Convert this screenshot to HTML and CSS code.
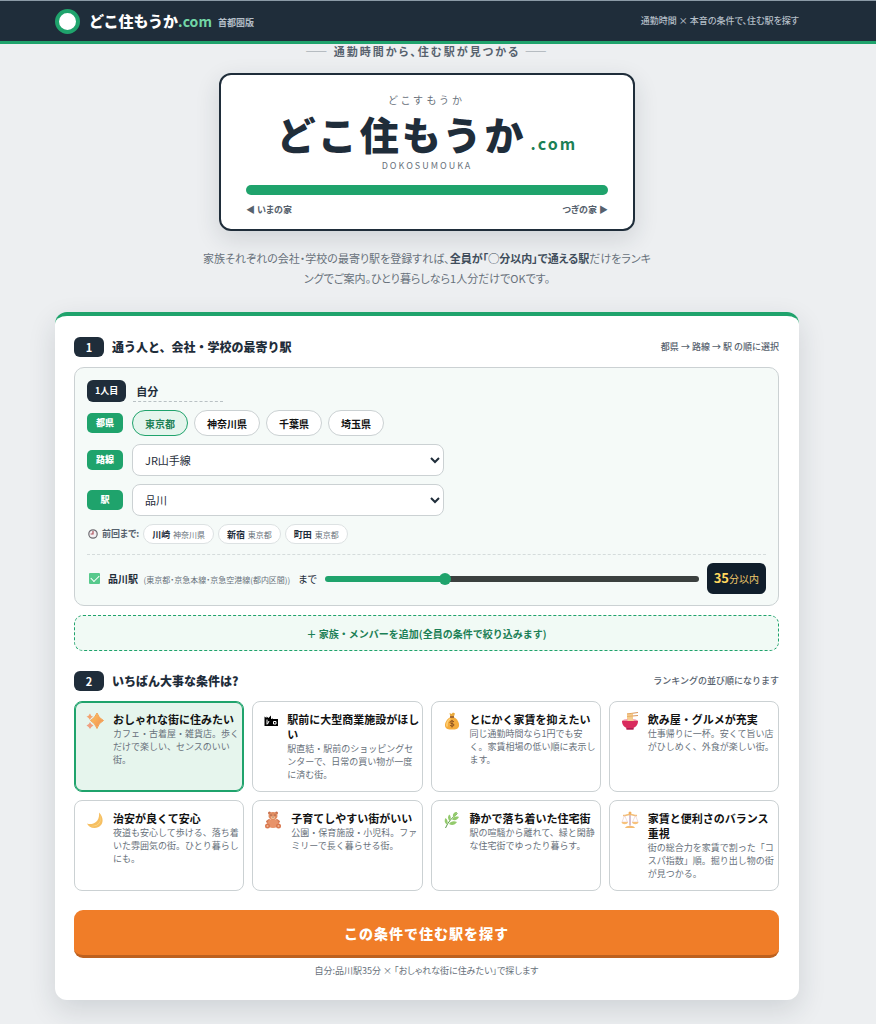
FILE: index.html
```
<!DOCTYPE html>
<html lang="ja">
  <head>
    <meta charset="UTF-8" />
    <meta name="viewport" content="width=device-width, initial-scale=1.0" />
    <title>どこ住もうか.com 首都圏版</title>
    <link rel="stylesheet" href="styles.css">
  </head>
  <body>
    <header class="site-header">
      <a class="brand" href="#">
        <span class="brand-mark"></span>
        <span class="brand-name">どこ住もうか<span class="brand-com">.com</span></span>
        <span class="brand-area">首都圏版</span>
      </a>
      <p class="tagline">通勤時間 × 本音の条件で、住む駅を探す</p>
    </header>

    <main class="page">
      <section class="hero">
        <p class="kicker"><span class="dash">――</span> 通勤時間から、住む駅が見つかる <span class="dash">――</span></p>
        <div class="sign">
          <p class="sign-kana">どこすもうか</p>
          <h1 class="sign-name">どこ住もうか<span class="sign-com">.com</span></h1>
          <p class="sign-roman">DOKOSUMOUKA</p>
          <div class="sign-line"></div>
          <div class="sign-ends">
            <span>◀ いまの家</span>
            <span>つぎの家 ▶</span>
          </div>
        </div>
        <p class="lead">家族それぞれの会社・学校の最寄り駅を登録すれば、<strong>全員が「◯分以内」で通える駅</strong>だけをランキングでご案内。ひとり暮らしなら1人分だけでOKです。</p>
      </section>

      <form class="search">
        <div class="section-head">
          <span class="num">1</span>
          <h2>通う人と、会社・学校の最寄り駅</h2>
          <span class="note">都県 → 路線 → 駅 の順に選択</span>
        </div>

        <div class="member">
          <div class="member-head">
            <label class="member-no" for="memberName">1人目</label>
            <input class="member-name" id="memberName" type="text" value="自分" />
          </div>

          <div class="field">
            <span class="field-label">都県</span>
            <div class="chips">
              <button class="chip active" type="button">東京都</button>
              <button class="chip" type="button">神奈川県</button>
              <button class="chip" type="button">千葉県</button>
              <button class="chip" type="button">埼玉県</button>
            </div>
          </div>

          <div class="field">
            <label class="field-label" for="line">路線</label>
            <select id="line">
              <option>JR山手線</option>
            </select>
          </div>

          <div class="field">
            <label class="field-label" for="station">駅</label>
            <select id="station">
              <option>品川</option>
            </select>
          </div>

          <div class="history">
            <span class="history-label">
              <svg class="clock" viewBox="0 0 20 20">
                <circle cx="10" cy="10" r="7" fill="#f3f0f2" stroke="#6d6a70" stroke-width="2" />
                <path d="M10 5V10H6" fill="none" stroke="#b0505a" stroke-width="2" />
              </svg>
              前回まで:
            </span>
            <button class="recent" type="button"><b>川崎</b> 神奈川県</button>
            <button class="recent" type="button"><b>新宿</b> 東京都</button>
            <button class="recent" type="button"><b>町田</b> 東京都</button>
          </div>

          <div class="limit">
            <input class="check" id="useStation" type="checkbox" checked />
            <label class="limit-label" for="useStation"><b>品川駅</b> <small>(東京都・京急本線・京急空港線(都内区間))</small></label>
            <label class="limit-to" for="minutes">まで</label>
            <input class="slider" id="minutes" type="range" min="5" max="100" step="5" value="35" style="--fill: 32%" />
            <output class="minutes" for="minutes"><b>35</b>分以内</output>
          </div>
        </div>

        <button class="add-member" type="button">＋ 家族・メンバーを追加(全員の条件で絞り込みます)</button>

        <div class="section-head second">
          <span class="num">2</span>
          <h2>いちばん大事な条件は?</h2>
          <span class="note">ランキングの並び順になります</span>
        </div>

        <div class="options">
          <button class="option active" type="button">
            <svg class="icon" viewBox="0 0 36 36">
              <defs>
                <linearGradient id="spark" x1="0" y1="0" x2="1" y2="1">
                  <stop offset="0" stop-color="#ffc65c" />
                  <stop offset="1" stop-color="#ee8a55" />
                </linearGradient>
              </defs>
              <path d="M22 2Q25 12 35 17Q25 22 22 33Q18 22 9 17Q18 12 22 2Z" fill="url(#spark)" stroke="#f3a356" stroke-width="2" stroke-linejoin="round" />
              <path d="M8 3Q9 8 14 9Q9 11 8 16Q6 11 1 9Q6 8 8 3Z" fill="#f4a36f" />
              <path d="M8 20Q10 26 15 27Q10 29 8 34Q6 29 1 27Q6 26 8 20Z" fill="#f0a080" />
            </svg>
            <span class="option-text">
              <span class="option-title">おしゃれな街に住みたい</span>
              <span class="option-desc">カフェ・古着屋・雑貨店。歩くだけで楽しい、センスのいい街。</span>
            </span>
          </button>
          <button class="option" type="button">
            <svg class="icon narrow" viewBox="0 0 28 36">
              <path d="M1 9L5 12V9L9 12L14 7V15L17 12V28H1Z" fill="#000" />
              <path d="M14 14H28V28H13Z" fill="#000" />
              <path d="M6 15V25M10 18L7 24M19 19H24V24H19Z" fill="none" stroke="#fff" stroke-width="2" />
            </svg>
            <span class="option-text">
              <span class="option-title">駅前に大型商業施設がほしい</span>
              <span class="option-desc">駅直結・駅前のショッピングセンターで、日常の買い物が一度に済む街。</span>
            </span>
          </button>
          <button class="option" type="button">
            <svg class="icon" viewBox="0 0 36 36">
              <path d="M13 2L17 4L20 1L24 3L21 11H15Z" fill="#e9a93c" />
              <path d="M15 10H21C28 13 33 21 32 28C31 34 25 35 18 35S5 34 4 28C3 21 9 13 15 10Z" fill="#f5ac3d" />
              <path d="M8 28C7 22 10 17 14 14" fill="none" stroke="#ffd27a" stroke-width="3" stroke-linecap="round" />
              <path d="M14 10H22" stroke="#8a5530" stroke-width="3" />
              <path d="M22 20C20 17 14 17 14 21C14 24 22 22 22 26C22 29 15 29 14 26M18 16V31" fill="none" stroke="#8a5020" stroke-width="2" />
            </svg>
            <span class="option-text">
              <span class="option-title">とにかく家賃を抑えたい</span>
              <span class="option-desc">同じ通勤時間なら1円でも安く。家賃相場の低い順に表示します。</span>
            </span>
          </button>
          <button class="option" type="button">
            <svg class="icon" viewBox="0 0 36 36">
              <path d="M12 4L34 1M12 9L34 7" stroke="#d9955b" stroke-width="2" />
              <path d="M14 3V19M18 3V19M22 2V14" stroke="#f0b869" stroke-width="3" />
              <ellipse cx="18" cy="18" rx="16" ry="4" fill="#f08aa0" />
              <path d="M13 14C16 12 24 12 26 17L24 19H13Z" fill="#f5cf94" />
              <path d="M2 18H34C34 26 29 30 25 32V35H11V32C7 30 2 26 2 18Z" fill="#d92b5d" />
              <path d="M11 32H25V35H11Z" fill="#a92050" />
            </svg>
            <span class="option-text">
              <span class="option-title">飲み屋・グルメが充実</span>
              <span class="option-desc">仕事帰りに一杯。安くて旨い店がひしめく、外食が楽しい街。</span>
            </span>
          </button>
          <button class="option" type="button">
            <svg class="icon" viewBox="0 0 36 36">
              <path d="M26 3C38 14 35 34 17 34C10 34 4 30 2 25C12 29 28 23 26 3Z" fill="#f6bf62" />
              <path d="M27 6C32 17 28 30 10 30C24 34 35 20 27 6Z" fill="#fbdc8d" />
            </svg>
            <span class="option-text">
              <span class="option-title">治安が良くて安心</span>
              <span class="option-desc">夜道も安心して歩ける、落ち着いた雰囲気の街。ひとり暮らしにも。</span>
            </span>
          </button>
          <button class="option" type="button">
            <svg class="icon" viewBox="0 0 36 36">
              <circle cx="11" cy="4" r="3" fill="#c76f4c" />
              <circle cx="25" cy="4" r="3" fill="#c76f4c" />
              <path d="M10 18L6 21L9 25ZM26 18L30 21L27 25Z" fill="#d57b55" stroke="#d57b55" stroke-width="4" stroke-linejoin="round" />
              <ellipse cx="18" cy="25" rx="11" ry="9" fill="#e8936a" />
              <ellipse cx="18" cy="10" rx="9" ry="8" fill="#e08c60" />
              <circle cx="7" cy="30" r="5" fill="#d9774f" />
              <circle cx="29" cy="30" r="5" fill="#d9774f" />
              <circle cx="7" cy="30" r="2" fill="#f1b48c" />
              <circle cx="29" cy="30" r="2" fill="#f1b48c" />
              <ellipse cx="18" cy="13" rx="4" ry="3" fill="#f3c39c" />
              <circle cx="14" cy="8" r="1" fill="#53302a" />
              <circle cx="22" cy="8" r="1" fill="#53302a" />
              <circle cx="18" cy="12" r="1" fill="#53302a" />
            </svg>
            <span class="option-text">
              <span class="option-title">子育てしやすい街がいい</span>
              <span class="option-desc">公園・保育施設・小児科。ファミリーで長く暮らせる街。</span>
            </span>
          </button>
          <button class="option" type="button">
            <svg class="icon" viewBox="0 0 36 36">
              <path d="M5 34C10 22 18 13 29 5" fill="none" stroke="#5e9b4c" stroke-width="2" />
              <path d="M28 2C22 2 19 6 20 12C25 11 28 8 28 2ZM13 7C9 10 9 16 13 20C17 16 16 11 13 7ZM5 14C2 19 3 24 8 27C11 22 9 17 5 14ZM32 12C25 10 21 12 18 17C24 20 29 18 32 12ZM28 22C21 19 15 21 12 26C18 30 24 28 28 22Z" fill="#93ca6c" />
            </svg>
            <span class="option-text">
              <span class="option-title">静かで落ち着いた住宅街</span>
              <span class="option-desc">駅の喧騒から離れて、緑と閑静な住宅街でゆったり暮らす。</span>
            </span>
          </button>
          <button class="option" type="button">
            <svg class="icon" viewBox="0 0 36 36">
              <path d="M18 4V29" stroke="#c9abc0" stroke-width="3" />
              <path d="M4 9C10 10 13 6 18 7C23 6 26 10 32 9" fill="none" stroke="#f3be78" stroke-width="3" />
              <path d="M7 9L2 22H13ZM29 9L23 22H34Z" fill="none" stroke="#e0bcbc" stroke-width="1" />
              <path d="M1 22H14C13 28 2 28 1 22ZM22 22H35C34 28 23 28 22 22Z" fill="#f7c27c" />
              <path d="M8 34C10 28 26 28 28 34Z" fill="#f5bb70" />
              <circle cx="18" cy="4" r="3" fill="#f3b05c" />
            </svg>
            <span class="option-text">
              <span class="option-title">家賃と便利さのバランス重視</span>
              <span class="option-desc">街の総合力を家賃で割った「コスパ指数」順。掘り出し物の街が見つかる。</span>
            </span>
          </button>
        </div>

        <button class="submit" type="button">この条件で住む駅を探す</button>
        <p class="summary">自分:品川駅35分 × 「おしゃれな街に住みたい」で探します</p>
      </form>
    </main>
    <script>
      const slider = document.getElementById("minutes");
      slider.addEventListener("input", () => {
        const rate = ((slider.value - slider.min) / (slider.max - slider.min)) * 100;
        slider.style.setProperty("--fill", `${rate}%`);
        document.querySelector(".minutes b").textContent = slider.value;
      });
    </script>
  </body>
</html>
```

FILE: styles.css
```
:root {
  --ink: #1f2d3a;
  --green: #1fa36c;
  --green-dark: #1c8056;
  --gray: #68717b;
  --line: #cbd1d3;
}

* {
  box-sizing: border-box;
}

body {
  margin: 0;
  background-color: #edeff1;
  color: var(--ink);
  font-family: "Noto Sans CJK JP", sans-serif;
  font-size: 11px;
  line-height: 16px;
  font-feature-settings: "palt";
}

h1,
h2,
p {
  margin: 0;
}

button,
input,
select {
  font-family: inherit;
  color: inherit;
}

button {
  cursor: pointer;
}

.site-header {
  display: flex;
  justify-content: space-between;
  align-items: center;
  height: 44px;
  padding: 0 77px 0 55px;
  background-color: var(--ink);
  border-top: 1px solid #8b9aa6;
  border-bottom: 3px solid var(--green);
}

.brand {
  display: flex;
  align-items: center;
  color: #fff;
  text-decoration: none;
}

.brand-mark {
  width: 25px;
  height: 25px;
  margin-right: 9px;
  border: 4px solid var(--green);
  border-radius: 50%;
  background-color: #fff;
}

.brand-name {
  font-size: 15px;
  font-weight: 900;
  line-height: 20px;
  font-feature-settings: normal;
}

.brand-com {
  color: #72d6a6;
  font-size: 14px;
  font-weight: 700;
}

.brand-area {
  margin: 4px 0 0 6px;
  color: #b4bec7;
  font-size: 9px;
  font-weight: 700;
  line-height: 12px;
}

.tagline {
  color: #b4bec7;
  font-size: 9px;
  font-weight: 500;
}

.page {
  padding: 0 77px 24px 55px;
}

.hero {
  display: flex;
  flex-direction: column;
  align-items: center;
  text-align: center;
}

.kicker {
  color: #56616d;
  font-size: 11px;
  font-weight: 700;
  line-height: 14px;
  letter-spacing: 2px;
}

.dash {
  color: #8c959d;
  font-weight: 400;
}

.sign {
  width: 100%;
  max-width: 416px;
  margin-top: 15px;
  padding: 18px 25px 11px;
  background-color: #fff;
  border: 2px solid var(--ink);
  border-radius: 12px;
  box-shadow: 0 8px 24px rgba(31, 45, 58, 0.14);
}

.sign-kana {
  color: var(--gray);
  font-size: 10px;
  line-height: 14px;
  letter-spacing: 4px;
}

.sign-name {
  font-size: 39px;
  font-weight: 900;
  line-height: 52px;
  letter-spacing: 3px;
  font-feature-settings: normal;
}

.sign-com {
  margin-left: 4px;
  color: var(--green-dark);
  font-size: 16px;
  font-weight: 700;
  line-height: 16px;
  letter-spacing: 2px;
}

.sign-roman {
  color: var(--gray);
  font-size: 9px;
  line-height: 14px;
  letter-spacing: 2px;
}

.sign-line {
  height: 10px;
  margin-top: 12px;
  border-radius: 5px;
  background-color: var(--green);
}

.sign-ends {
  display: flex;
  justify-content: space-between;
  margin-top: 7px;
  color: #56616d;
  font-size: 9px;
  font-weight: 700;
}

.lead {
  max-width: 456px;
  margin-top: 17px;
  color: var(--gray);
  font-size: 11px;
  line-height: 20px;
}

.lead strong {
  color: #404d5b;
}

.search {
  margin-top: 24px;
  padding: 21px 20px 21px 19px;
  background-color: #fff;
  border-top: 4px solid var(--green);
  border-radius: 12px;
  box-shadow: 0 10px 28px rgba(31, 45, 58, 0.14);
}

.section-head {
  display: flex;
  align-items: center;
  gap: 8px;
  height: 20px;
}

.section-head.second {
  margin-top: 20px;
}

.section-head h2 {
  font-size: 12px;
  font-weight: 900;
  line-height: 20px;
  font-feature-settings: normal;
}

.num {
  width: 30px;
  border-radius: 6px;
  background-color: var(--ink);
  color: #fff;
  font-size: 11px;
  font-weight: 700;
  line-height: 20px;
  text-align: center;
}

.note {
  margin-left: auto;
  color: #56616d;
  font-size: 9px;
  font-weight: 500;
  font-feature-settings: normal;
}

.member {
  display: flex;
  flex-direction: column;
  gap: 8px;
  margin-top: 10px;
  padding: 12px 12px 11px;
  background-color: #f5faf8;
  border: 1px solid var(--line);
  border-radius: 10px;
}

.member-head {
  display: flex;
  align-items: center;
  gap: 7px;
}

.member-no {
  padding: 0 8px;
  border-radius: 6px;
  background-color: var(--ink);
  color: #fff;
  font-size: 9px;
  font-weight: 700;
  line-height: 22px;
}

.member-name {
  width: 90px;
  height: 22px;
  padding: 0 3px;
  background: none;
  border: 0;
  border-bottom: 1px dashed #b9c1c4;
  font-size: 11px;
  font-weight: 700;
}

.field {
  display: flex;
  align-items: center;
  gap: 9px;
}

.field-label {
  width: 36px;
  border-radius: 5px;
  background-color: var(--green);
  color: #fff;
  font-size: 9px;
  font-weight: 900;
  line-height: 20px;
  text-align: center;
}

.chips {
  display: flex;
  gap: 6px;
}

.chip {
  height: 26px;
  padding: 0 12px;
  background-color: #fff;
  border: 1px solid var(--line);
  border-radius: 13px;
  color: #111;
  font-size: 10px;
  font-weight: 700;
}

.chip.active {
  background-color: #e5f5ed;
  border-color: var(--green);
  color: var(--green-dark);
}

select {
  width: 100%;
  max-width: 312px;
  height: 32px;
  padding: 0 0 0 8px;
  background-color: #fff;
  border: 1px solid var(--line);
  border-radius: 8px;
  font-size: 11px;
}

.history {
  display: flex;
  align-items: center;
  gap: 4px;
}

.history-label {
  display: flex;
  align-items: center;
  gap: 3px;
  color: #56616d;
  font-size: 9px;
  font-weight: 700;
}

.clock {
  width: 12px;
  height: 12px;
}

.recent {
  height: 20px;
  padding: 0 8px;
  background-color: #fff;
  border: 1px solid #dde2e3;
  border-radius: 10px;
  color: var(--gray);
  font-size: 8px;
}

.recent b {
  margin-right: 1px;
  color: var(--ink);
  font-size: 9px;
}

.limit {
  display: flex;
  align-items: center;
  gap: 8px;
  margin-top: 2px;
  padding-top: 8px;
  border-top: 1px dashed #d5dcdc;
}

.check {
  appearance: none;
  display: grid;
  place-items: center;
  width: 11px;
  height: 11px;
  margin: 0 0 0 2px;
  border-radius: 1px;
  background-color: #a9ccba;
}

.check:checked {
  background-color: #57c98c;
}

.check:checked::after {
  content: "";
  width: 7px;
  height: 4px;
  margin-bottom: 2px;
  border-left: 1px solid #fff;
  border-bottom: 1px solid #fff;
  transform: rotate(-45deg);
}

.limit-label b {
  margin-right: 3px;
  font-size: 10px;
}

.limit-label small {
  color: var(--gray);
  font-size: 8px;
}

.limit-to {
  font-size: 10px;
}

.slider {
  appearance: none;
  flex: 1;
  min-width: 80px;
  height: 6px;
  margin: 0;
  border-radius: 3px;
  background: linear-gradient(to right, var(--green) var(--fill), #3b403f var(--fill));
}

.slider::-webkit-slider-thumb {
  appearance: none;
  width: 12px;
  height: 12px;
  border-radius: 50%;
  background-color: var(--green);
}

.minutes {
  padding: 0 7px;
  border-radius: 6px;
  background-color: #101e2b;
  color: #f0cb6b;
  font-size: 10px;
  line-height: 30px;
}

.minutes b {
  color: #ffd75e;
  font-size: 13px;
}

.add-member {
  width: 100%;
  height: 36px;
  margin-top: 9px;
  background-color: #f1faf5;
  border: 1px dashed var(--green);
  border-radius: 9px;
  color: var(--green-dark);
  font-size: 10px;
  font-weight: 700;
}

.options {
  display: grid;
  grid-template-columns: repeat(4, 1fr);
  grid-auto-rows: 1fr;
  gap: 8px;
  margin-top: 10px;
}

.option {
  display: flex;
  align-items: flex-start;
  gap: 9px;
  padding: 10px 2px 10px 11px;
  background-color: #fff;
  border: 1px solid var(--line);
  border-radius: 8px;
  text-align: left;
  font-feature-settings: normal;
}

.option.active {
  background-color: #e6f5ed;
  border-color: var(--green);
  box-shadow: inset 0 0 0 1px var(--green);
}

.icon {
  flex: none;
  width: 18px;
  height: 18px;
}

.icon.narrow {
  width: 14px;
}

.option-title,
.option-desc {
  display: block;
}

.option-title {
  color: #111;
  font-size: 11px;
  font-weight: 700;
  line-height: 15px;
}

.option-desc {
  color: var(--gray);
  font-size: 9px;
  line-height: 13px;
}

.submit {
  width: 100%;
  height: 48px;
  margin-top: 19px;
  padding: 0;
  background-color: #f07d28;
  border: 0;
  border-bottom: 3px solid #bd611f;
  border-radius: 9px;
  color: #fff;
  font-size: 14px;
  font-weight: 900;
  letter-spacing: 1px;
}

.summary {
  margin-top: 5px;
  color: var(--gray);
  font-size: 9px;
  text-align: center;
}
```
